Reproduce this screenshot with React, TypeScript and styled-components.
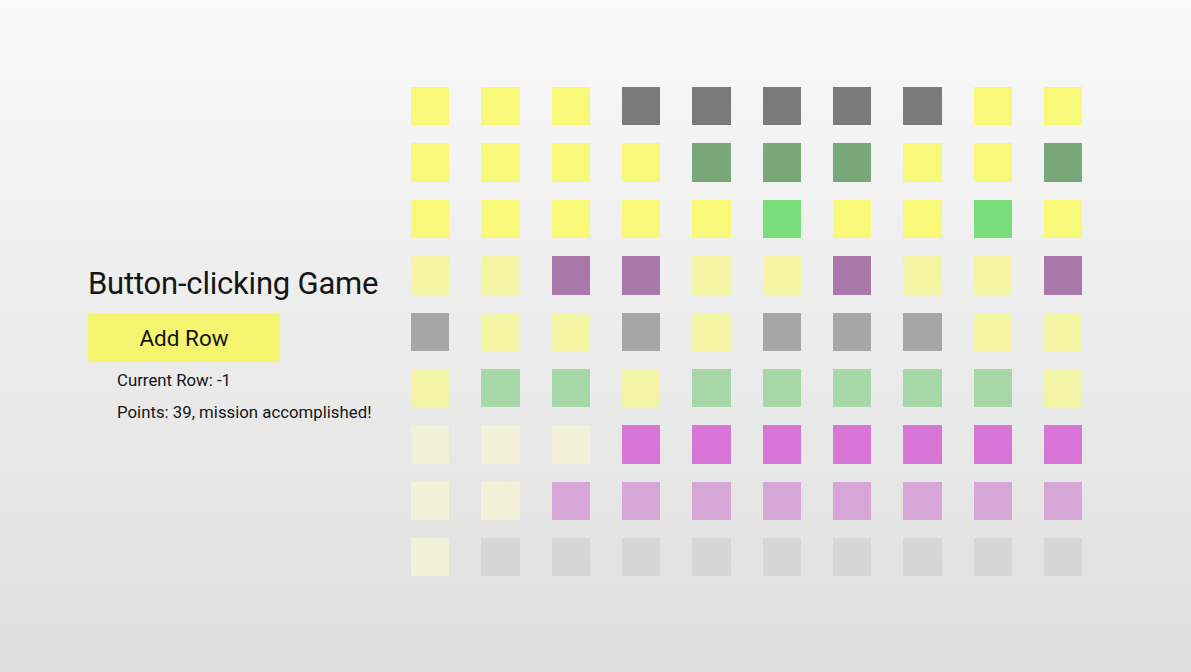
import React from "react";
import styled, { createGlobalStyle } from "styled-components";

const GlobalStyle = createGlobalStyle`
  html, body {
    margin: 0;
    padding: 0;
    height: 100%;
  }
  body {
    background: linear-gradient(to bottom, #f9f9f9 0%, #dfdfdf 100%);
    font-family: Roboto, "Liberation Sans", sans-serif;
    color: #151515;
  }
`;

const Page = styled.main`
  display: flex;
  align-items: flex-start;
  height: 672px;
  box-sizing: border-box;
  padding: 87px 0 0 88px;
`;

const Panel = styled.section`
  width: 323px;
  margin-top: 177px;
  display: flex;
  flex-direction: column;
  align-items: flex-start;
`;

const Title = styled.h1`
  margin: 0;
  font-size: 31px;
  font-weight: 400;
  line-height: 40px;
  letter-spacing: -0.2px;
  white-space: nowrap;
`;

const AddButton = styled.button`
  margin-top: 9px;
  width: 192px;
  height: 49px;
  border: none;
  background: #f5f56f;
  font-family: inherit;
  font-size: 22.5px;
  color: #151515;
  cursor: pointer;
`;

const Info = styled.p<{ $first?: boolean }>`
  margin: ${(p) => (p.$first ? "7px" : "10px")} 0 0 29px;
  font-size: 16.8px;
  line-height: 22px;
  white-space: nowrap;
`;

const Grid = styled.div`
  display: grid;
  grid-template-columns: repeat(10, 38.33px);
  grid-auto-rows: 38.375px;
  column-gap: 32px;
  row-gap: 18px;
`;

const Cell = styled.div<{ $c: string }>`
  background: ${(p) => p.$c};
`;

const C: Record<string, string> = {
  Y: "#f8f879",
  D: "#7a7a7a",
  G: "#79a979",
  B: "#79dd79",
  y: "#f5f5a6",
  P: "#a977a9",
  g: "#a6a6a6",
  n: "#a6d7a6",
  l: "#f3f3a6",
  M: "#d776d7",
  p: "#f2f2d9",
  m: "#d7a6d7",
  v: "#d6d6d6",
};

const rows = [
  "YYYDDDDDYY",
  "YYYYGGGYYG",
  "YYYYYBYYBY",
  "yyPPyyPyyP",
  "gyygygggyy",
  "lnnlnnnnnl",
  "pppMMMMMMM",
  "ppmmmmmmmm",
  "pvvvvvvvvv",
];

export default function App() {
  return (
    <>
      <GlobalStyle />
      <Page>
        <Panel>
          <Title>Button-clicking Game</Title>
          <AddButton>Add Row</AddButton>
          <Info $first>Current Row: -1</Info>
          <Info>Points: 39, mission accomplished!</Info>
        </Panel>
        <Grid>
          {rows.flatMap((r, i) =>
            r.split("").map((k, j) => <Cell key={`${i}-${j}`} $c={C[k]} />)
          )}
        </Grid>
      </Page>
    </>
  );
}
